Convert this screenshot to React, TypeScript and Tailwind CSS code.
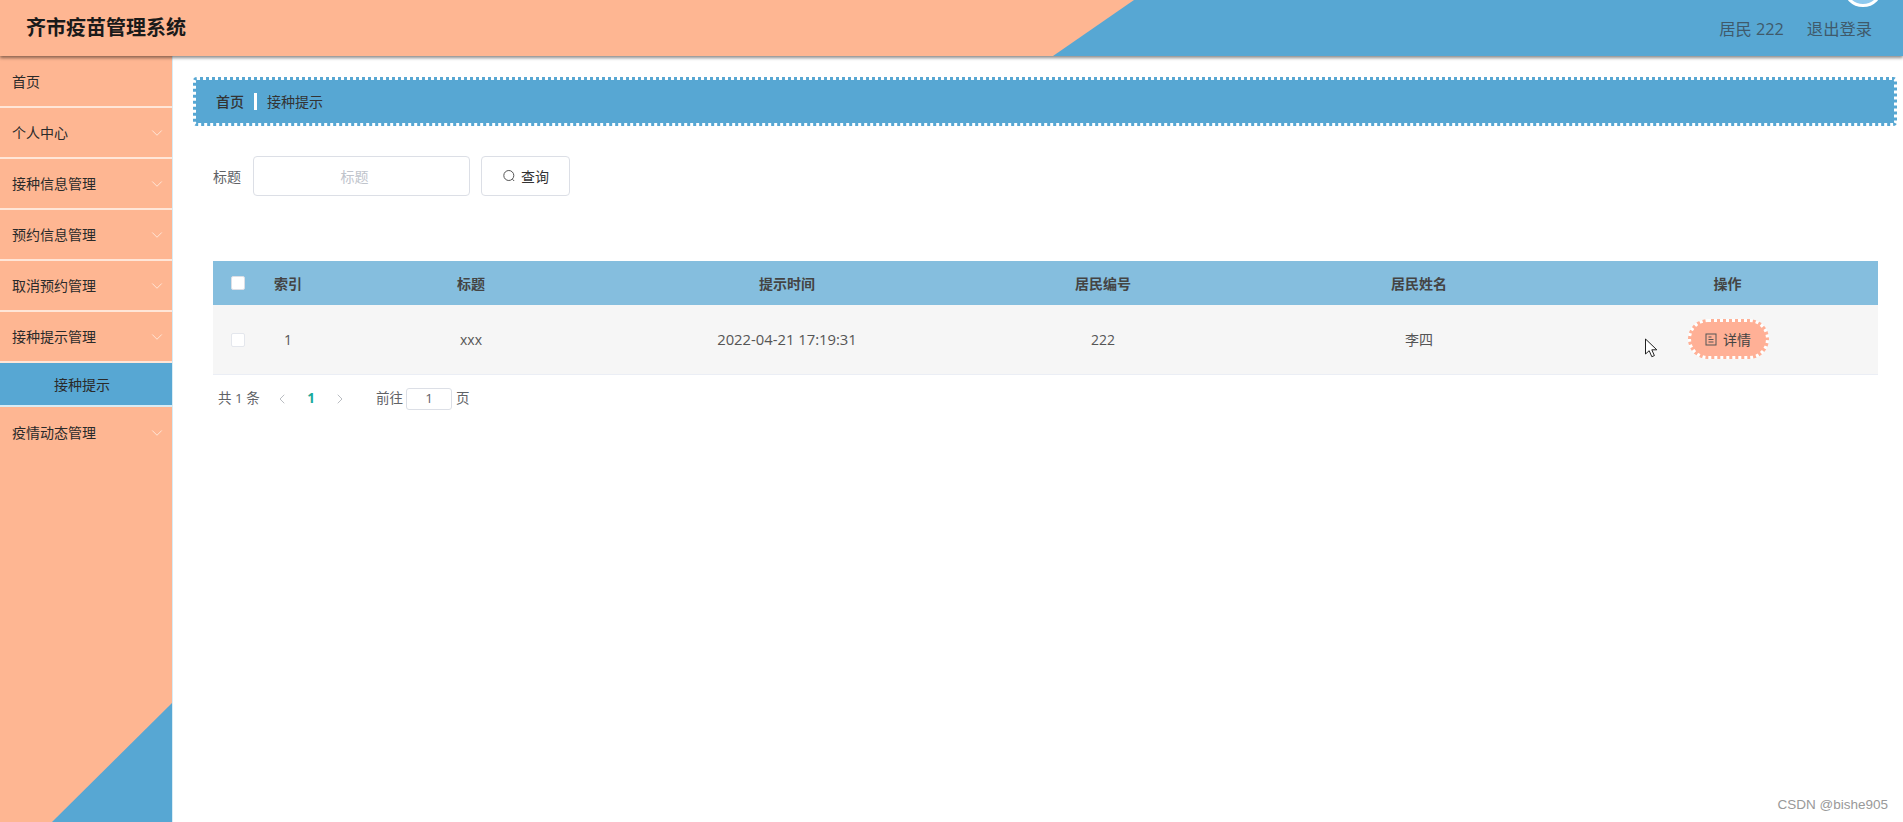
import { ChevronDown, ChevronLeft, ChevronRight } from "lucide-react";

const menu = [
  { nombre: "首页", flecha: false },
  { nombre: "个人中心", flecha: true },
  { nombre: "接种信息管理", flecha: true },
  { nombre: "预约信息管理", flecha: true },
  { nombre: "取消预约管理", flecha: true },
  { nombre: "接种提示管理", flecha: true },
];

const columnas = ["索引", "标题", "提示时间", "居民编号", "居民姓名", "操作"];

function Casilla({ tenue }: { tenue?: boolean }) {
  return (
    <span
      className={`block w-[14px] h-[14px] rounded-[2px] bg-white border ${
        tenue ? "border-[#e4e7ed]" : "border-[#dcdfe6]"
      }`}
    />
  );
}

export default function App() {
  return (
    <div className="h-[822px] overflow-hidden flex flex-col bg-white text-[#333] font-['Open_Sans','Noto_Sans_CJK_SC',sans-serif]">
      {/* CABECERA */}
      <header className="relative z-10 h-[56px] shrink-0 flex items-center justify-between bg-[#feb692] shadow-[0_2px_3px_rgba(0,0,0,0.45)] overflow-hidden">
        <div className="absolute inset-0 bg-[#57a7d3] [clip-path:polygon(1053px_56px,1134px_0,100%_0,100%_100%)]" />
        <div className="absolute left-[1843px] top-[-33px] w-[40px] h-[40px] rounded-full border-[3px] border-white bg-[#8ec9ee]" />
        <h1 className="relative pl-[26px] text-[20px] font-bold text-[#1a1a1a]">齐市疫苗管理系统</h1>
        <div className="relative flex items-center gap-[23px] pr-[31px] pt-[2px] text-[16.3px] text-[#3f5a6b]">
          <span>居民 222</span>
          <span>退出登录</span>
        </div>
      </header>

      <div className="flex flex-1 min-h-0">
        {/* MENU LATERAL */}
        <aside className="relative w-[173px] shrink-0 bg-[#feb692] border-r border-[#d8ecf5] text-[14px] text-[#2a2a2a]">
          <div className="absolute inset-0 bg-[#57a7d3] [clip-path:polygon(100%_647px,100%_100%,52px_100%)]" />
          <nav className="relative pt-[1px]">
            {menu.map((item) => (
              <div
                key={item.nombre}
                className="h-[51px] flex items-center justify-between pl-[12px] pr-[6px] border-b-2 border-[#ffe6d8]"
              >
                <span>{item.nombre}</span>
                {item.flecha && <ChevronDown size={18} strokeWidth={1.3} className="text-[#ffe6d8]" />}
              </div>
            ))}
            <div className="h-[44px] flex items-center justify-center pr-[8px] bg-[#57a7d3] border-b-2 border-[#d8ecf5]">
              接种提示
            </div>
            <div className="h-[51px] flex items-center justify-between pl-[12px] pr-[6px]">
              <span>疫情动态管理</span>
              <ChevronDown size={18} strokeWidth={1.3} className="text-[#ffe6d8]" />
            </div>
          </nav>
        </aside>

        {/* CONTENIDO */}
        <main className="relative flex-1 min-w-0">
          <div className="mt-[21px] ml-[20px] mr-[6px] h-[49px] flex items-center pl-[20px] rounded-[4px] bg-[#57a7d3] border-[3px] border-dotted border-white text-[14px]">
            <span className="font-medium">首页</span>
            <span className="mx-[10px] w-[3px] h-[17px] bg-white" />
            <span>接种提示</span>
          </div>

          <form className="mt-[30px] ml-[40px] flex items-center text-[14px]">
            <label className="text-[#606266] mr-[12px]">标题</label>
            <div className="w-[217px] h-[40px] flex items-center justify-center pr-[14px] rounded-[4px] border border-[#dcdfe6] text-[#c0c4cc]">
              标题
            </div>
            <button
              type="button"
              className="ml-[11px] w-[89px] h-[40px] flex items-center justify-center gap-[5px] rounded-[4px] border border-[#dcdfe6] text-[#333]"
            >
              <svg width="14" height="14" viewBox="0 0 14 14" fill="none" stroke="#555" strokeWidth="1">
                <circle cx="6.8" cy="6.5" r="5" />
                <path d="M10.4 10.2l1.8 1.8" />
              </svg>
              查询
            </button>
          </form>

          <div className="mt-[65px] ml-[40px] mr-[25px]">
            <table className="w-full table-fixed border-collapse text-[14px]">
              <colgroup>
                <col className="w-[50px]" />
                <col className="w-[50px]" />
                <col className="w-[316px]" />
                <col className="w-[316px]" />
                <col className="w-[316px]" />
                <col className="w-[316px]" />
                <col />
              </colgroup>
              <thead>
                <tr className="h-[44px] bg-[#85bede] text-[#444]">
                  <th className="pl-[18px]">
                    <Casilla />
                  </th>
                  {columnas.map((c) => (
                    <th key={c} className="font-bold text-center">
                      {c}
                    </th>
                  ))}
                </tr>
              </thead>
              <tbody>
                <tr className="h-[69px] bg-[#f6f6f6] border-b border-[#ebeef5] text-center text-[#555]">
                  <td className="pl-[18px] pt-[2px]">
                    <Casilla tenue />
                  </td>
                  <td>1</td>
                  <td>xxx</td>
                  <td className="text-[14.8px]">2022-04-21 17:19:31</td>
                  <td>222</td>
                  <td>李四</td>
                  <td>
                    <button
                      type="button"
                      className="ml-[1px] inline-flex items-center justify-center gap-[6px] w-[81px] h-[40px] rounded-full bg-[#ffb096] border-[3px] border-dotted border-white text-[#444]"
                    >
                      <svg width="12" height="13" viewBox="0 0 12 13" fill="none" stroke="#555" strokeWidth="1">
                        <rect x="1" y="1" width="10" height="11" />
                        <path d="M3.5 4h3M3.5 6.5h5M3.5 9h5" />
                      </svg>
                      详情
                    </button>
                  </td>
                </tr>
              </tbody>
            </table>

            <div className="mt-[12px] h-[24px] pl-[5px] flex items-center text-[13.5px] text-[#606266]">
              <span className="w-[56px]">共 1 条</span>
              <ChevronLeft size={16} strokeWidth={1.2} className="text-[#a8acb3]" />
              <span className="w-[16px] ml-[13px] text-center font-bold text-[#1aa99a]">1</span>
              <ChevronRight size={16} strokeWidth={1.2} className="text-[#a8acb3] ml-[13px]" />
              <span className="ml-[28px]">前往</span>
              <span className="ml-[3px] w-[46px] h-[22px] flex items-center justify-center rounded-[3px] border border-[#dcdfe6]">
                1
              </span>
              <span className="ml-[4px]">页</span>
            </div>
          </div>

          {/* PUNTERO DEL RATON */}
          <svg
            className="absolute left-[1471px] top-[282px]"
            width="16"
            height="22"
            viewBox="0 0 16 22"
            fill="#fff"
            stroke="#222"
            strokeWidth="1"
          >
            <path d="M1.5 1v15l3.7-3.3 2.6 6 2.6-1.1-2.6-5.8h5z" />
          </svg>

          <span className="absolute right-[15px] bottom-[7px] text-[13.5px] text-[#999] font-['Liberation_Sans',sans-serif]">
            CSDN @bishe905
          </span>
        </main>
      </div>
    </div>
  );
}
